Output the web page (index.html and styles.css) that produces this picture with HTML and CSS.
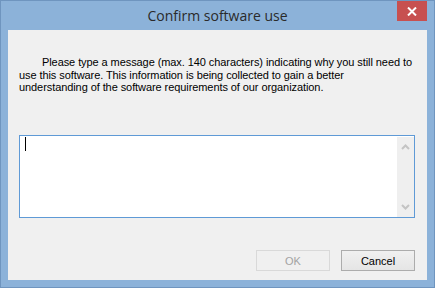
FILE: index.html
```html
<!DOCTYPE html>
<html>
<head>
<meta charset="utf-8">
<link rel="stylesheet" href="styles.css">
</head>
<body>
<div class="window">
  <div class="titlebar">
    <span class="spacer"></span>
    <span class="title">Confirm software use</span>
    <button class="close" aria-label="Close">
      <svg width="10" height="9" viewBox="0 0 10 9"><path d="M1 0.5 L9 8.5 M9 0.5 L1 8.5" stroke="#fff" stroke-width="2" fill="none"/></svg>
    </button>
  </div>
  <div class="client">
    <p class="message"><span class="indent"></span>Please type a message (max. 140 characters) indicating why you still need to<br>use this software. This information is being collected to gain a better<br>understanding of the software requirements of our organization.</p>
    <div class="input">
      <div class="text"><span class="caret"></span></div>
      <div class="scrollbar">
        <svg width="9" height="6" viewBox="0 0 9 6"><path d="M1 5 L4.5 1.5 L8 5" stroke="#c4c4c4" stroke-width="2" fill="none"/></svg>
        <svg width="9" height="6" viewBox="0 0 9 6"><path d="M1 1 L4.5 4.5 L8 1" stroke="#c4c4c4" stroke-width="2" fill="none"/></svg>
      </div>
    </div>
    <div class="buttons">
      <button class="btn disabled">OK</button>
      <button class="btn">Cancel</button>
    </div>
  </div>
</div>
</body>
</html>
```
FILE: styles.css
```css
html, body {
  margin: 0;
  padding: 0;
  background: #8cb2d9;
}
.window {
  box-sizing: border-box;
  width: 435px;
  height: 288px;
  border: 1px solid #6f95bf;
  background: #8cb2d9;
  display: flex;
  flex-direction: column;
  padding: 0 7px 7px 7px;
}
.titlebar {
  height: 29px;
  margin: 0 -7px;
  padding: 0 7px;
  display: grid;
  grid-template-columns: 1fr auto 1fr;
  align-items: start;
}
.title {
  font-family: "Open Sans", "Noto Sans", sans-serif;
  font-size: 14px;
  color: #2a2a2a;
  line-height: 29px;
  padding-top: 0;
}
.close {
  justify-self: end;
  width: 30px;
  height: 20px;
  border: 0;
  padding: 0;
  margin: 0;
  background: #c75050;
  display: flex;
  align-items: center;
  justify-content: center;
}
.client {
  flex: 1;
  background: #f0f0f0;
  display: flex;
  flex-direction: column;
  padding: 26px 12px 9px 11px;
}
.message {
  margin: 0;
  font-family: "Liberation Sans", Arial, sans-serif;
  font-size: 11px;
  line-height: 12.5px;
  color: #000;
  white-space: nowrap;
  letter-spacing: -0.08px;
}
.indent {
  display: inline-block;
  width: 23px;
}
.input {
  margin-top: 41px;
  height: 83px;
  box-sizing: border-box;
  border: 1px solid #5f9ad6;
  background: #fff;
  display: flex;
}
.text {
  flex: 1;
  padding: 1px 0 0 5px;
}
.caret {
  display: block;
  width: 1px;
  height: 14px;
  background: #000;
}
.scrollbar {
  width: 17px;
  margin: 1px 0 0 0;
  background: #efefef;
  display: flex;
  flex-direction: column;
  justify-content: space-between;
  align-items: center;
  padding: 7px 0 7px 0;
}
.buttons {
  margin-top: auto;
  display: flex;
  justify-content: flex-end;
  gap: 11px;
}
.btn {
  width: 74px;
  height: 21px;
  box-sizing: border-box;
  border: 1px solid #acacac;
  background: linear-gradient(#f0f0f0, #e5e5e5);
  font-family: "Liberation Sans", Arial, sans-serif;
  font-size: 11px;
  color: #000;
  padding: 0;
}
.btn.disabled {
  border-color: #d9d9d9;
  background: #f0f0f0;
  color: #a3a3a3;
}
```
